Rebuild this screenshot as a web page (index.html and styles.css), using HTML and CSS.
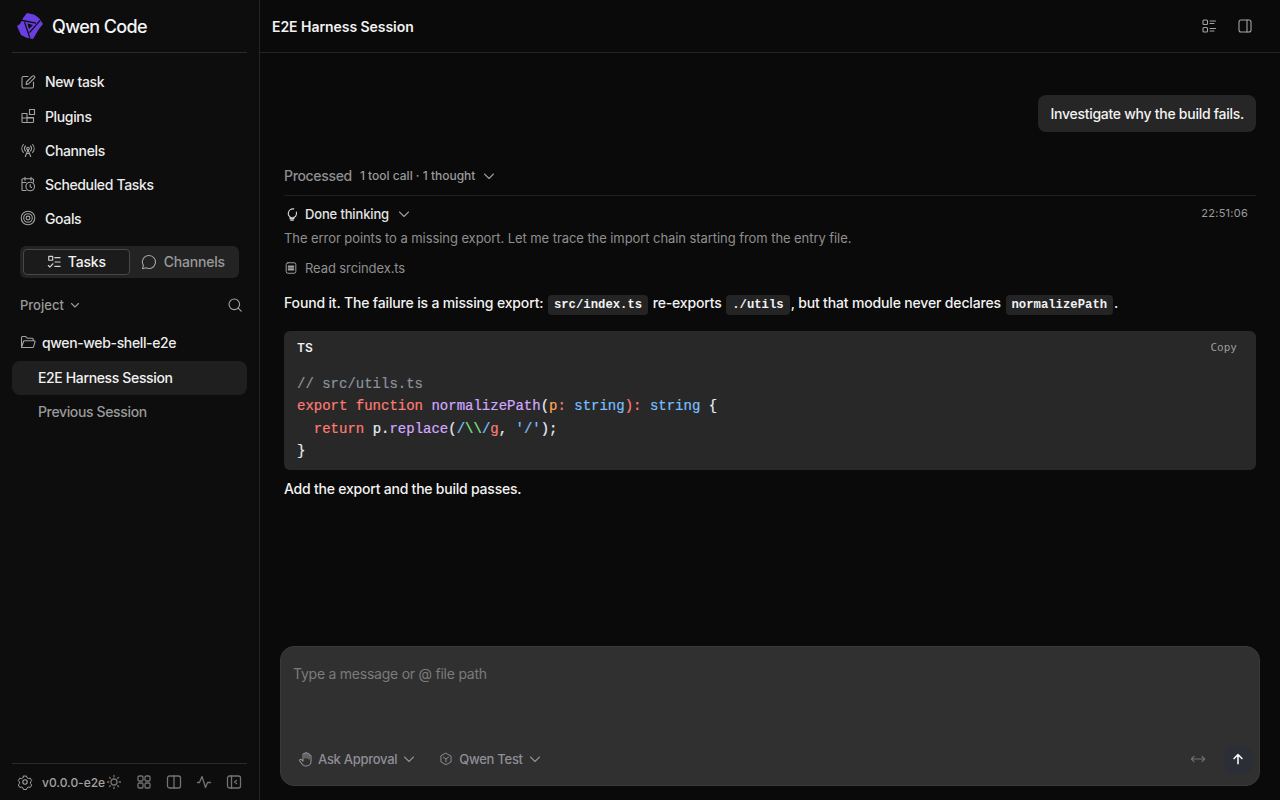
FILE: index.html
```html
<!DOCTYPE html>
<html lang="en">
<head>
  <meta charset="UTF-8">
  <meta name="viewport" content="width=device-width, initial-scale=1.0">
  <title>Qwen Code</title>
  <link rel="stylesheet" href="styles.css">
</head>
<body>
  <div class="app">
    <aside class="sidebar">
      <div class="brand">
        <svg class="logo" width="28" height="28" viewBox="-14 -14 28 28">
          <path fill="#6a3fe0" d="M-3-13 4-11.500 9-8 13-2 9 3 3 13-4 11.500-9 9-13 0-10-2-7-8z"/>
          <g stroke="#0d0d0d" stroke-width="1.300" fill="none">
            <path d="M-10-6 6-2.800"/>
            <path transform="rotate(120)" d="M-10-6 6-2.800"/>
            <path transform="rotate(240)" d="M-10-6 6-2.800"/>
          </g>
          <path fill="#0d0d0d" d="M-2.500-2.500 3-1-1 3z"/>
        </svg>
        <span class="brand-name">Qwen Code</span>
      </div>
      <nav class="nav">
        <a class="nav-item">
          <svg class="ico" viewBox="0 0 16 16"><path d="M8 2.500H3.500a1.500 1.500 0 0 0-1.500 1.500v8.500A1.500 1.500 0 0 0 3.500 14H12a1.500 1.500 0 0 0 1.500-1.500V8M6.500 8l-.4 2.400 2.400-.5 5.800-5.800a1.300 1.300 0 0 0-1.900-1.900z"/></svg>
          New task</a>
        <a class="nav-item">
          <svg class="ico" viewBox="0 0 16 16"><path d="M2.500 5.500h4.500v9H3a1 1 0 0 1-1-1V6a.5.500 0 0 1 .500-.500zM2 10h11M7 9.500h6.500v4a1 1 0 0 1-1 1H7M9.500 1.500h5v5h-5z"/></svg>
          Plugins</a>
        <a class="nav-item">
          <svg class="ico" viewBox="0 0 16 16"><circle cx="8" cy="6.500" r="1.300"/><path d="M5.300 14.500 8 7.800l2.700 6.700M6.300 11.500h3.400M5.500 9a3.500 3.500 0 0 1 0-5M10.500 4a3.500 3.500 0 0 1 0 5M3.400 10.500a6 6 0 0 1 0-8M12.600 2.500a6 6 0 0 1 0 8"/></svg>
          Channels</a>
        <a class="nav-item">
          <svg class="ico" viewBox="0 0 16 16"><path d="M5 1.200v3M11 1.200v3M6 14.500H3a1 1 0 0 1-1-1V3.800a1 1 0 0 1 1-1h9.500a1 1 0 0 1 1 1V6M2 6.500h4"/><circle cx="10.200" cy="10.500" r="4.300"/><path d="M10.200 8.500v2.200l1.300.8"/></svg>
          Scheduled Tasks</a>
        <a class="nav-item">
          <svg class="ico" viewBox="0 0 16 16"><circle cx="8" cy="8" r="6.800"/><circle cx="8" cy="8" r="4.300"/><circle cx="8" cy="8" r="1.900"/></svg>
          Goals</a>
      </nav>
      <div class="switch">
        <button class="switch-btn active">
          <svg class="ico sm bright" viewBox="0 0 16 16"><path d="M2 1.500h4.500V6H2zM9 3h6M9 8h6M9 13h6M1.500 12l1.800 1.800L6.800 10"/></svg>
          Tasks</button>
        <button class="switch-btn">
          <svg class="ico" viewBox="0 0 16 16"><path d="M8 1.500a6.500 6.500 0 1 1-3 12.300l-3.500 .9.900-3.300A6.500 6.500 0 0 1 8 1.500z"/></svg>
          Channels</button>
      </div>
      <div class="project-head">
        <span class="project-label">Project
          <svg class="chev" viewBox="0 0 12 12"><path d="M2.500 4.500 6 8l3.500-3.500"/></svg>
        </span>
        <svg class="ico" viewBox="0 0 16 16"><circle cx="7.300" cy="7.300" r="5.300"/><path d="m11.200 11.200 3 3"/></svg>
      </div>
      <div class="folder">
        <svg class="ico" viewBox="0 0 16 16"><path d="M1.500 12.500V3.500a1 1 0 0 1 1-1h3.200l1.500 1.700h5a1 1 0 0 1 1 1V6.500M1.500 13.500 3.500 7.500a1 1 0 0 1 1-.7h9.800a.8.8 0 0 1 .7 1l-1.500 5a1 1 0 0 1-1 .7H2.500a1 1 0 0 1-1-1"/></svg>
        qwen-web-shell-e2e
      </div>
      <a class="session current">E2E Harness Session</a>
      <a class="session">Previous Session</a>
      <div class="foot">
        <svg class="ico gear" viewBox="0 0 16 16"><path d="M6.400 1.500h3.200l.6 1.800 1.800 1 1.900-.4 1.500 2.600-1.200 1.500v2l1.200 1.500-1.500 2.600-1.900-.4-1.800 1-.6 1.800H6.400l-.6-1.800-1.800-1-1.900.4L.6 11.500 1.800 10V8L.6 6.500l1.500-2.600 1.900.4 1.800-1z" transform="translate(.8 .7) scale(.9)"/><circle cx="8" cy="8" r="2.200"/></svg>
        <span class="version">v0.0.0-e2e</span>
        <svg class="ico dim sun" viewBox="0 0 16 16"><circle cx="8" cy="8" r="3"/><path d="M8 1.500v1.300M8 13.200v1.300M1.500 8h1.300M13.200 8h1.300M3.400 3.400l.9.900M11.700 11.700l.9.900M3.400 12.600l.9-.9M11.700 4.300l.9-.9"/></svg>
        <svg class="ico dim" viewBox="0 0 16 16"><rect x="2" y="2" width="5" height="5" rx="1.200"/><rect x="9" y="2" width="5" height="5" rx="1.200"/><rect x="2" y="9" width="5" height="5" rx="1.200"/><rect x="9" y="9" width="5" height="5" rx="1.200"/></svg>
        <svg class="ico dim" viewBox="0 0 16 16"><rect x="1.500" y="2" width="13" height="12" rx="2"/><path d="M8 2v12"/></svg>
        <svg class="ico dim" viewBox="0 0 16 16"><path d="M1.500 8.500h2l2.500-6 3.500 11 2-5h3"/></svg>
        <svg class="ico dim" viewBox="0 0 16 16"><rect x="1.500" y="2" width="13" height="12" rx="2"/><path d="M5.500 2v12M10.500 6.500 8.500 8l2 1.500"/></svg>
      </div>
    </aside>
    <main class="main">
      <header class="topbar">
        <h1 class="title">E2E Harness Session</h1>
        <div class="top-actions">
          <svg class="ico" viewBox="0 0 16 16"><rect x="2" y="2" width="4.500" height="4.500" rx="1"/><rect x="2" y="9.500" width="4.500" height="4.500" rx="1"/><path d="M9 3h5.500M9 5.500h4M9 10.500h5.500M9 13h4"/></svg>
          <svg class="ico" viewBox="0 0 16 16"><rect x="2" y="2" width="12" height="12" rx="2"/><path d="M10 2v12"/></svg>
        </div>
      </header>
      <section class="chat">
        <div class="user-row"><div class="user-msg">Investigate why the build fails.</div></div>
        <div class="processed">
          <span class="processed-label">Processed</span>
          <span class="processed-meta">1 tool call · 1 thought</span>
          <svg class="chev" viewBox="0 0 12 12"><path d="M1.500 4 6 8.500 10.500 4"/></svg>
        </div>
        <div class="thinking-row">
          <div class="thinking">
            <svg class="ico sm bright" viewBox="0 0 16 16"><path d="M10 2.200a5.200 5.200 0 1 0-2 10.300 5.200 5.200 0 0 0 5-6.700M5.800 11.500v1.800h4.400v-1.800M6.500 15h3"/></svg>
            Done thinking
            <svg class="chev" viewBox="0 0 12 12"><path d="M1.500 4 6 8.500 10.500 4"/></svg>
          </div>
          <time class="stamp">22:51:06</time>
        </div>
        <p class="thought">The error points to a missing export. Let me trace the import chain starting from the entry file.</p>
        <div class="tool-row">
          <svg class="ico sm" viewBox="0 0 16 16"><rect x="2.500" y="2" width="11" height="12" rx="2"/><path class="thick" d="M5 6h6M5 8h6M5 10h6"/></svg>
          Read srcindex.ts
        </div>
        <p class="answer">Found it. The failure is a missing export: <code>src/index.ts</code> re-exports <code>./utils</code>, but that module never declares <code>normalizePath</code>.</p>
        <div class="code-card">
          <div class="code-head"><span class="lang">TS</span><span class="copy">Copy</span></div>
          <div class="code">
            <div class="line"><span class="c-com">// src/utils.ts</span></div>
            <div class="line"><span class="c-key">export function </span><span class="c-fn">normalizePath</span><span>(</span><span class="c-arg">p</span><span class="c-key">: </span><span class="c-type">string</span><span class="c-key">): </span><span class="c-type">string </span><span>{</span></div>
            <div class="line"><span class="c-key">  return </span><span>p.</span><span class="c-fn">replace</span><span>(</span><span class="c-type">/</span><span class="c-esc">\\</span><span class="c-type">/</span><span class="c-key">g</span><span>, </span><span class="c-type">'/'</span><span>);</span></div>
            <div class="line"><span>}</span></div>
          </div>
        </div>
        <p class="answer after">Add the export and the build passes.</p>
      </section>
      <div class="composer">
        <div class="placeholder">Type a message or @ file path</div>
        <div class="composer-bar">
          <span class="pick">
            <svg class="ico" viewBox="0 0 16 16"><path d="M5 8V3.500a1 1 0 0 1 2 0V7M7 7V2.500a1 1 0 0 1 2 0V7M9 7V3.300a1 1 0 0 1 2 0V8M11 8V5a1 1 0 0 1 2 0v5.500A4.500 4.500 0 0 1 8.500 15h-1c-1.500 0-2.500-.7-3.300-1.800L1.800 10c-.7-1 .7-2.200 1.700-1.300L5 10.200V8"/></svg>
            Ask Approval
            <svg class="chev" viewBox="0 0 12 12"><path d="M1.500 4 6 8.500 10.500 4"/></svg>
          </span>
          <span class="pick">
            <svg class="ico sm" viewBox="0 0 16 16"><path d="M8 1.500 13.800 4.700v6.600L8 14.500l-5.800-3.200V4.700zM5.200 6 8 8l2.800-2M8 8v3.200"/></svg>
            Qwen Test
            <svg class="chev" viewBox="0 0 12 12"><path d="M1.500 4 6 8.500 10.500 4"/></svg>
          </span>
          <span class="spacer"></span>
          <svg class="ico expand" viewBox="0 0 18 12"><path d="M1.500 6h15M4.500 3 1.500 6l3 3M13.500 3l3 3-3 3"/></svg>
          <button class="send"><svg class="ico send-ico" viewBox="0 0 16 16"><path d="M8 13.500V3M3.500 7.500 8 3l4.500 4.500"/></svg></button>
        </div>
      </div>
    </main>
  </div>
</body>
</html>
```

FILE: styles.css
```css
* {
  box-sizing: border-box;
}

body {
  margin: 0;
  height: 100vh;
  overflow: hidden;
  background-color: #0a0a0a;
  color: #f2f2f2;
  font-family: Inter, "Liberation Sans", sans-serif;
  font-size: 14px;
}

p, h1 {
  margin: 0;
}

.app {
  display: flex;
  height: 800px;
}

/* icons */
.ico {
  width: 16px;
  height: 16px;
  flex: none;
  fill: none;
  stroke: #a3a3a3;
  stroke-width: 1.1;
  stroke-linecap: round;
  stroke-linejoin: round;
}

.ico.sm {
  width: 14px;
  height: 14px;
}

.ico.bright {
  stroke: #d4d4d4;
  stroke-width: 1.300;
}

.ico.dim {
  stroke: #737373;
  stroke-width: 1.300;
}

.chev {
  width: 12px;
  height: 12px;
  flex: none;
  fill: none;
  stroke: #9a9a9a;
  stroke-width: 1.100;
  stroke-linecap: round;
  stroke-linejoin: round;
}

/* sidebar */
.sidebar {
  width: 260px;
  flex: none;
  display: flex;
  flex-direction: column;
  padding: 0 12px;
  background-color: #0d0d0d;
  border-right: 1px solid #242424;
  letter-spacing: -0.36px;
}

.brand {
  height: 53px;
  flex: none;
  display: flex;
  align-items: center;
  gap: 8px;
  padding: 0 4px;
  border-bottom: 1px solid #2a2a2a;
}

.logo {
  flex: none;
}

.brand-name {
  font-size: 18px;
  font-weight: 500;
  letter-spacing: -0.6px;
  color: #f5f5f5;
}

.nav {
  display: flex;
  flex-direction: column;
  padding-top: 11px;
}

.nav-item {
  height: 34px;
  display: flex;
  align-items: center;
  gap: 9px;
  padding: 0 8px;
  color: #ececec;
  font-weight: 500;
}

.nav-item:first-child {
  height: 35px;
}

.switch {
  margin: 11px 8px 0;
  height: 32px;
  flex: none;
  display: flex;
  padding: 3px;
  border-radius: 6px;
  background-color: #232323;
}

.switch-btn {
  flex: 1;
  display: flex;
  align-items: center;
  justify-content: center;
  gap: 7px;
  padding: 0 0 1px;
  border: 1px solid transparent;
  border-radius: 4px;
  background: none;
  color: #9a9a9a;
  font: 500 14px Inter, sans-serif;
  letter-spacing: -0.2px;
}

.switch-btn.active {
  background-color: #1b1b1b;
  border-color: #484848;
  color: #f2f2f2;
}

.project-head {
  display: flex;
  align-items: center;
  justify-content: space-between;
  margin-top: 15px;
  padding: 0 4px 0 8px;
  height: 24px;
  flex: none;
}

.project-label {
  display: flex;
  align-items: center;
  gap: 5px;
  color: #9a9a9a;
  font-size: 13px;
  font-weight: 500;
  letter-spacing: 0;
}

.folder {
  display: flex;
  align-items: center;
  gap: 6px;
  height: 34px;
  margin: 8px 0 2px;
  padding: 0 8px;
  flex: none;
  color: #ececec;
  font-weight: 500;
}

.session {
  display: flex;
  align-items: center;
  height: 34px;
  flex: none;
  padding: 0 0 1px 26px;
  border-radius: 8px;
  color: #9a9a9a;
  font-weight: 500;
}

.session.current {
  background-color: #1f1f1f;
  color: #f2f2f2;
}

.foot {
  margin-top: auto;
  height: 37px;
  flex: none;
  display: flex;
  align-items: center;
  padding: 0 6px 0 5px;
  border-top: 1px solid #2a2a2a;
}

.gear {
  margin-right: 9px;
}

.version {
  color: #a3a3a3;
  font-size: 12px;
  font-weight: 500;
  white-space: nowrap;
  letter-spacing: 0;
}

.foot .dim {
  margin-left: 14px;
}

.foot .sun {
  margin-left: 1px;
}

/* main column */
.main {
  flex: 1;
  min-width: 0;
  display: flex;
  flex-direction: column;
  background-color: #0a0a0a;
}

.topbar {
  height: 53px;
  flex: none;
  display: flex;
  align-items: center;
  justify-content: space-between;
  padding: 0 27px 0 12px;
  border-bottom: 1px solid #242424;
}

.title {
  font-size: 14px;
  font-weight: 600;
  letter-spacing: -0.05px;
}

.top-actions {
  display: flex;
  gap: 20px;
}

.chat {
  flex: 1;
  min-height: 0;
  padding: 42px 24px 0;
}

.user-row {
  display: flex;
  justify-content: flex-end;
}

.user-msg {
  padding: 0 12px;
  height: 37px;
  line-height: 37px;
  border-radius: 8px;
  background-color: #262626;
  font-weight: 500;
  letter-spacing: -0.27px;
}

.processed {
  display: flex;
  align-items: center;
  gap: 8px;
  margin-top: 24px;
  height: 40px;
  border-bottom: 1px solid #1f1f1f;
}

.processed-label {
  color: #8f8f8f;
  font-weight: 500;
  letter-spacing: -0.33px;
}

.processed-meta {
  color: #9a9a9a;
  font-size: 12px;
  font-weight: 500;
}

.thinking-row {
  display: flex;
  align-items: center;
  justify-content: space-between;
  padding: 0 8px 0 1px;
  height: 38px;
}

.thinking {
  display: flex;
  align-items: center;
  gap: 6px;
  color: #e4e4e4;
  font-size: 13px;
  font-weight: 500;
  letter-spacing: -0.15px;
  position: relative;
  top: -1px;
}

.thinking .chev {
  margin-left: 3px;
}

.stamp {
  color: #9a9a9a;
  font-size: 11px;
  letter-spacing: 0.25px;
  position: relative;
  top: -2px;
}

.thought {
  color: #8f8f8f;
  font-size: 13px;
  line-height: 16px;
  letter-spacing: -0.07px;
  margin-top: -4px;
}

.tool-row {
  display: flex;
  align-items: center;
  gap: 7px;
  margin-top: 14px;
  color: #8f8f8f;
  font-size: 13px;
  height: 16px;
  letter-spacing: -0.1px;
}

.thick {
  stroke-width: 1.500;
}

.answer {
  margin-top: 15px;
  line-height: 24px;
  font-weight: 500;
  color: #f2f2f2;
  letter-spacing: -0.16px;
}

.answer code {
  display: inline-block;
  margin: 0 1px;
  padding: 0 6px;
  height: 20px;
  border-radius: 4px;
  background-color: #242424;
  font: 700 12.250px/20px "Liberation Mono", monospace;
  letter-spacing: 0;
}

.code-card {
  margin-top: 16px;
  height: 139px;
  padding: 0 13px;
  border-radius: 6px;
  background-color: #282828;
}

.code-head {
  display: flex;
  align-items: center;
  justify-content: space-between;
  height: 33px;
  padding-right: 6px;
}

.lang {
  font-size: 12px;
  font-weight: 600;
}

.copy {
  color: #9a9a9a;
  font: 11px "DejaVu Sans Mono", monospace;
}

.code {
  margin: 9px 0 0;
  color: #e6edf3;
  font: 400 14px/22.400px "Liberation Mono", monospace;
  -webkit-text-stroke: 0.2px currentColor;
}

.line {
  height: 22.400px;
  white-space: pre;
}

.c-com { color: #8b949e; }
.c-key { color: #ff7b72; }
.c-fn { color: #d2a8ff; }
.c-arg { color: #ffa657; }
.c-type { color: #79c0ff; }
.c-esc { color: #7ee787; }

.answer.after {
  margin-top: 7px;
  letter-spacing: -0.22px;
}

/* composer */
.composer {
  height: 140px;
  flex: none;
  margin: 0 20px 14px;
  display: flex;
  flex-direction: column;
  border: 1px solid #3a3a3a;
  border-radius: 14px;
  background-color: #303030;
}

.placeholder {
  flex: 1;
  padding: 18px 12px 0;
  color: #7b7b7b;
  letter-spacing: -0.24px;
}

.composer-bar {
  display: flex;
  align-items: center;
  height: 32px;
  margin-bottom: 10px;
  padding: 0 7px 0 17px;
  gap: 24px;
}

.pick {
  display: flex;
  align-items: center;
  gap: 4px;
  color: #8e8e96;
  font-size: 13px;
  font-weight: 500;
  letter-spacing: -0.28px;
}

.pick .chev,
.pick .ico {
  stroke: #8e8e96;
}

.pick .chev {
  margin-left: 2px;
}

.pick .ico.sm {
  margin-right: 2px;
}

.spacer {
  flex: 1;
  margin-right: -24px;
}

.expand {
  width: 16px;
  height: 12px;
  stroke: #6e6e78;
  stroke-width: 1.300;
}

.send {
  width: 28px;
  height: 28px;
  margin-left: -6px;
  display: flex;
  align-items: center;
  justify-content: center;
  padding: 0;
  border: 0;
  border-radius: 8px;
  background-color: #2b2e36;
}

.send-ico {
  width: 14px;
  height: 14px;
  stroke: #f5f5f5;
  stroke-width: 1.800;
}
```
